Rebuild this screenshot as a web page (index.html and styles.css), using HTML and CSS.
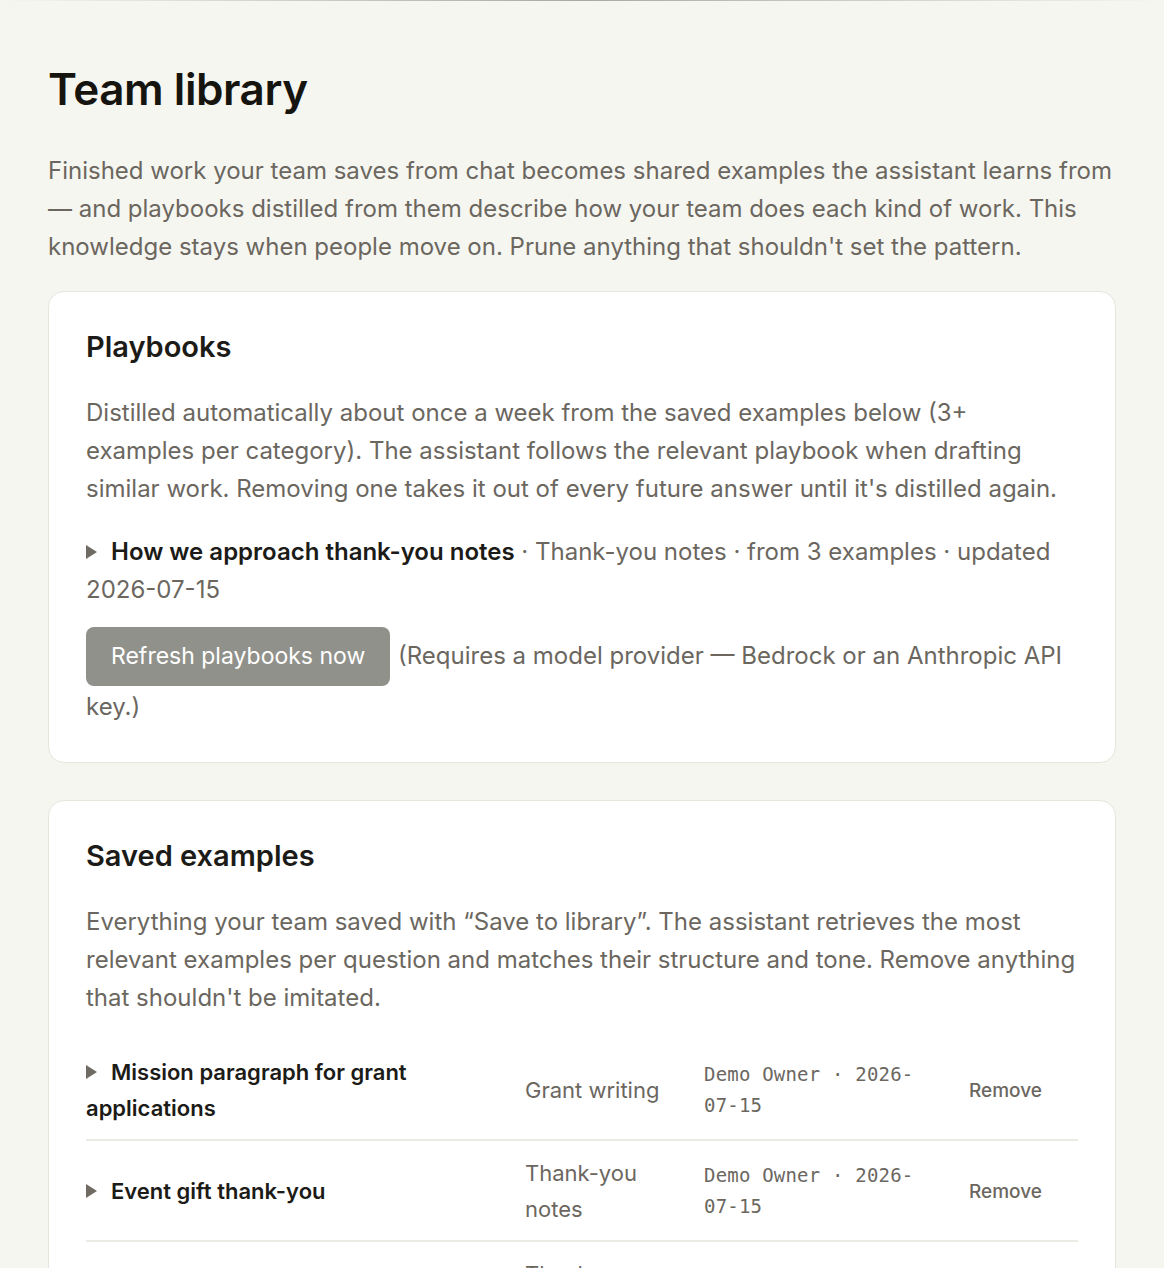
FILE: index.html
```html
<!DOCTYPE html>
<html lang="en">
<head>
    <meta charset="UTF-8">
    <meta name="viewport" content="width=device-width, initial-scale=1.0">
    <title>Team library</title>
    <link rel="stylesheet" href="styles.css">
</head>
<body>
    <div class="topline"></div>

    <main class="page">
        <h1>Team library</h1>
        <p class="intro">Finished work your team saves from chat becomes shared examples the assistant learns from — and playbooks distilled from them describe how your team does each kind of work. This knowledge stays when people move on. Prune anything that shouldn't set the pattern.</p>

        <section class="card">
            <h2>Playbooks</h2>
            <p class="muted">Distilled automatically about once a week from the saved examples below (3+ examples per category). The assistant follows the relevant playbook when drafting similar work. Removing one takes it out of every future answer until it's distilled again.</p>

            <details class="playbook">
                <summary><span class="caret"></span><strong>How we approach thank-you notes</strong> <span class="muted">· Thank-you notes · from 3 examples · updated 2026-07-15</span></summary>
            </details>

            <p class="refresh muted"><button class="btn" type="button">Refresh playbooks now</button> (Requires a model provider — Bedrock or an Anthropic API key.)</p>
        </section>

        <section class="card">
            <h2>Saved examples</h2>
            <p class="muted">Everything your team saved with “Save to library”. The assistant retrieves the most relevant examples per question and matches their structure and tone. Remove anything that shouldn't be imitated.</p>

            <table class="examples">
                <colgroup>
                    <col class="c-title">
                    <col class="c-cat">
                    <col class="c-meta">
                    <col class="c-act">
                </colgroup>
                <tbody>
                    <tr>
                        <td class="title"><span class="caret"></span>Mission paragraph for grant applications</td>
                        <td class="cat">Grant writing</td>
                        <td class="meta">Demo Owner · 2026-07-15</td>
                        <td><button class="link" type="button">Remove</button></td>
                    </tr>
                    <tr>
                        <td class="title"><span class="caret"></span>Event gift thank-you</td>
                        <td class="cat">Thank-you notes</td>
                        <td class="meta">Demo Owner · 2026-07-15</td>
                        <td><button class="link" type="button">Remove</button></td>
                    </tr>
                    <tr>
                        <td class="title"><span class="caret"></span>Volunteer appreciation letter</td>
                        <td class="cat">Thank-you notes</td>
                        <td class="meta">Demo Owner · 2026-07-15</td>
                        <td><button class="link" type="button">Remove</button></td>
                    </tr>
                </tbody>
            </table>
        </section>
    </main>
</body>
</html>
```

FILE: styles.css
```css
body {
    margin: 0;
    background: #f6f6f1;
    color: #1c1b17;
    font-family: Inter, "Noto Sans", sans-serif;
    font-size: 24px;
    line-height: 38px;
}

.topline {
    height: 1px;
    background: linear-gradient(90deg, rgba(170, 170, 160, 0), #a9a9a0 50%, rgba(170, 170, 160, 0));
}

.page {
    padding: 62px 48px 40px;
}

h1 {
    margin: 0;
    font-size: 44px;
    line-height: 53px;
    font-weight: 600;
    letter-spacing: -0.01em;
    color: #16140f;
}

.intro {
    margin: 36px 0 25px;
    color: #6b675f;
}

.muted {
    color: #6b675f;
}

.card {
    background: #fff;
    border: 1px solid #e6e5de;
    border-radius: 16px;
    padding: 36px 37px 36px;
    margin-bottom: 37px;

    h2 {
        margin: 0 0 28px;
        font-size: 29px;
        line-height: 38px;
        font-weight: 600;
    }

    p {
        margin: 0;
    }
}

.caret {
    display: inline-block;
    width: 0;
    height: 0;
    border-top: 7px solid transparent;
    border-bottom: 7px solid transparent;
    border-left: 11px solid #6f6a62;
    margin-right: 14px;
    vertical-align: 1px;
}

.playbook {
    margin-top: 25px;

    summary {
        display: block;
        list-style: none;
        cursor: pointer;
    }

    strong {
        font-weight: 600;
    }
}

.refresh {
    margin-top: 18px !important;
}

.btn {
    font: inherit;
    font-size: 23px;
    color: #fff;
    background: #91918b;
    border: 0;
    border-radius: 8px;
    padding: 14px 25px;
    line-height: 31px;
    margin: 0 1px 2px 0;
}

.examples {
    width: 100%;
    margin-top: 23px;
    border-collapse: collapse;
    table-layout: fixed;
    font-size: 22px;

    .c-title { width: 439px; }
    .c-cat { width: 179px; }
    .c-meta { width: 265px; }

    td {
        padding: 14px 20px 13px 0;
        border-bottom: 2px solid #ebeae4;
        vertical-align: middle;
        line-height: 36px;
    }

    .title {
        font-weight: 600;
    }

    .cat {
        color: #6b675f;
        padding-right: 14px;
    }

    .meta {
        font-family: "DejaVu Sans Mono", "Liberation Mono", monospace;
        font-size: 19px;
        letter-spacing: 0.2px;
        line-height: 31px;
        color: #6b675f;
        padding-right: 36px;
    }
}

.link {
    font: inherit;
    font-size: 19px;
    font-weight: 500;
    color: #6b675f;
    background: none;
    border: 0;
    padding: 0;
}
```
